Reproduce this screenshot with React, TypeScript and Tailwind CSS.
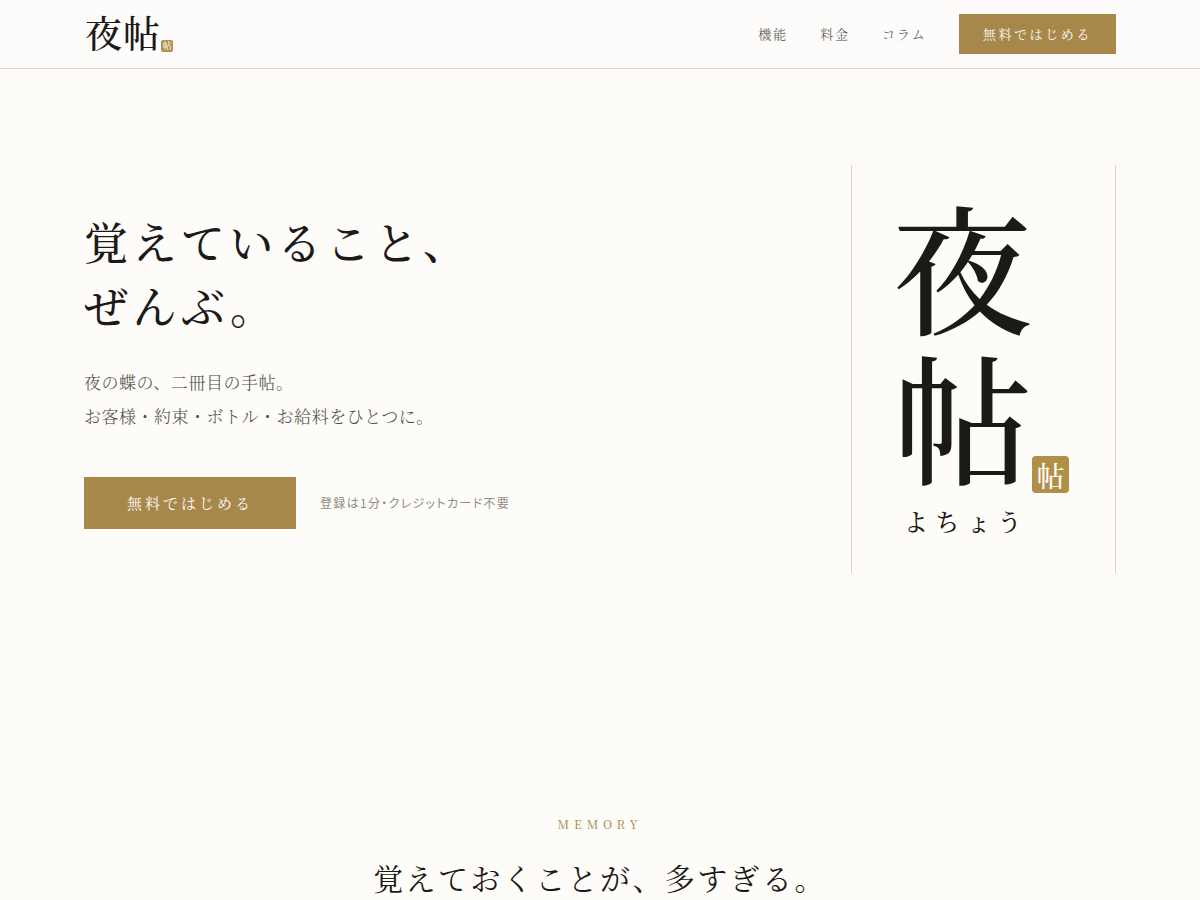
const navLinks = [
    { label: "機能", href: "#features" },
    { label: "料金", href: "#pricing" },
    { label: "コラム", href: "#column" },
];

function Seal({ className }: { className: string }) {
    return (
        <span className={`flex items-center justify-center bg-[#b09048] font-medium text-[#fdfcf8] ${className}`}>
            帖
        </span>
    );
}

export default function App() {
    return (
        <div className="min-h-screen bg-[#fdfcf8] font-['Noto_Serif_CJK_JP','Noto_Serif_JP','Noto_Sans_CJK_JP',serif] text-[#1c1a18]" lang="ja">
            {/* Header */}
            <header className="border-b border-[#ddd3bf] bg-[#fdfcfb]">
                <div className="mx-auto flex h-17 max-w-[1080px] items-center justify-between px-6">
                    <a href="#top" className="flex items-end pb-1 pl-px">
                        <span className="text-[37px] leading-10 font-medium tracking-[0.03em]">夜帖</span>
                        <Seal className="size-3 rounded-xs text-[9px] leading-3" />
                    </a>
                    <nav className="flex items-center gap-8 text-[13px]">
                        {navLinks.map((link) => (
                            <a key={link.href} href={link.href} className="font-light tracking-[0.15em] text-[#4f4c48]">
                                {link.label}
                            </a>
                        ))}
                        <button type="button" className="h-10 bg-[#a8874a] px-6 tracking-[0.2em] text-[#fdfcf8]">
                            無料ではじめる
                        </button>
                    </nav>
                </div>
            </header>

            <main>
                {/* Hero */}
                <section id="top" className="mx-auto flex max-w-[1080px] items-center justify-between px-6 py-24">
                    <div>
                        <h1 className="mb-7 text-[44px] leading-16 font-medium tracking-[0.1em]">
                            覚えていること、
                            <br />
                            ぜんぶ。
                        </h1>
                        <p className="mb-11 text-[17px] leading-[34px] font-light tracking-[0.03em] text-[#4f4c48]">
                            夜の蝶の、二冊目の手帖。
                            <br />
                            お客様・約束・ボトル・お給料をひとつに。
                        </p>
                        <div className="flex items-center gap-6">
                            <button type="button" className="h-13 bg-[#a8874a] px-[43px] text-[15px] tracking-[0.2em] text-[#fdfcf8]">
                                無料ではじめる
                            </button>
                            <span className="font-['Noto_Sans_CJK_JP',sans-serif] text-xs tracking-[0.11em] text-[#8f8c86] [font-feature-settings:'palt']">
                                登録は1分・クレジットカード不要
                            </span>
                        </div>
                    </div>

                    {/* Wordmark */}
                    <div className="h-[408px] w-[265px] border-x border-[#ddd3bf] pt-9 pl-10">
                        <div className="flex items-end">
                            <div className="text-[140px] leading-[140px] font-medium tracking-[10px] [writing-mode:vertical-rl]">夜帖</div>
                            <Seal className="mb-2 size-[37px] rounded-sm text-[28px] leading-9" />
                        </div>
                        <div className="pl-3 text-2xl leading-10 font-medium tracking-[0.3em]">よちょう</div>
                    </div>
                </section>

                {/* Memory */}
                <section className="px-6 py-36 text-center">
                    <p className="mb-4 text-xs leading-[22px] tracking-[0.4em] text-[#a8874a]">MEMORY</p>
                    <h2 className="text-3xl leading-[52px] tracking-[0.08em]">覚えておくことが、多すぎる。</h2>
                </section>
            </main>
        </div>
    );
}
